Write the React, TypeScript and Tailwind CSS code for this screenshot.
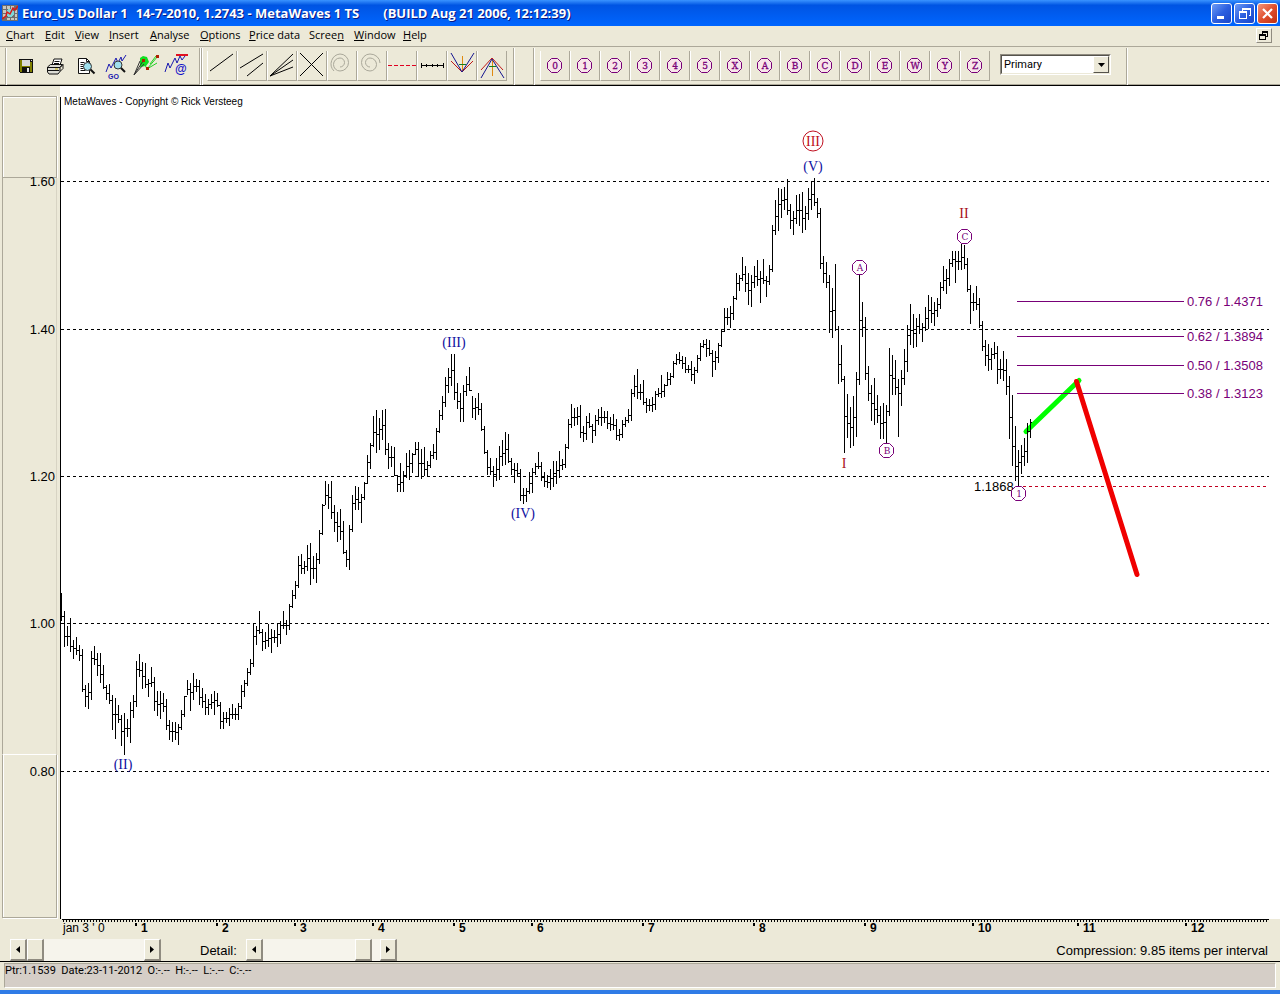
import React from 'react';

// Each run lists "high-low" pairs in thirds of a chart unit below `base`.
const runs = [
  {
    base: 560,
    bars: '98-183 153-260 197-257 174-275 240-296 231-284 255-302 267-395 375-440 370-446 273-420 258-315 280-347 278-368 316-386 374-421 373-433 405-509 414-536 436-488 465-557 459-584 477-530 427-548 405-473 303-440 282-352 306-386 309-383 358-410 321-380 350-453 394-468 393-476 400-456 417-509 480-540 486-545 486-540 492-554 450-509 408-470 360-405 370-452 339-421 356-395 360-434 384-444 402-464 418-466 402-448 394-464 399-440 425-506 456-506 456-488 444-497 432-478 444-480 429-480 375-446 360-411 324-378 297-346 191-322 198-255 153-222 207-272 216-267 191-260 207-278 210-250 192-260 183-251 153-206 180-224 132-209 90-143 63-117',
  },
  {
    base: 320,
    bars: '708-803 702-762 723-763 675-753 669-795 708-776 699-789 630-732 552-644 484-556 492-567 484-598 555-636 576-665 567-660 604-701 690-742 615-749 525-636 497-570 501-570 522-608 487-541 405-493 369-446 289-382 270-399 294-390 270-361 267-404 369-448 378-441 381-467 465-517 429-515 453-516 399-474 390-479 400-458 366-405 366-472 387-476 381-467 423-468 393-443 372-416 324-421 270-338 228-299 171-261 144-218 102-197 102-239 189-266 219-307 195-305 168-228 141-213 228-293 234-299 219-284 249-333 318-402 390-464 414-466 438-500 414-483 378-479 360-439 336-435 342-430 414-465 429-490 429-470 447-542 504-551 504-547 456-521 444-518 429-464 396-448 426-484 456-502 465-503 447-510 423-500 423-493 393-474',
  },
  {
    base: 320,
    bars: '417-450 372-444 297-387 252-323 264-318 261-315 255-354 318-365 288-360 279-323 312-369 284-347 267-315 261-318 272-308 272-327 290-333 282-330 297-360 327-363 300-354 291-321 267-309 207-303 165-231 147-237 192-240 180-254 234-279 237-272 231-275 213-270 204-230 165-234 192-231 156-198 159-194 123-173 102-135 96-132 108-147 111-159 135-159 123-183 141-192 105-158 69-123 60-84 57-111 60-108 90-171 93-150 69-129 30-80',
  },
  {
    base: 120,
    bars: '565-635 565-616 557-623 528-599 459-540 465-513 411-483 438-515 459-554 465-560 438-503 420-497 453-548 417-492 468-530 435-494 315-456 240-344 204-332 208-293 201-269 177-285 252-326 273-345 225-311 222-317 216-338 258-329 204-299 187-271 174-258 234-293 264-446 408-489 425-503 465-638 504-654 432-632 618-791 675-785 768-999 822-953 861-984 828-977 756-950 465-795 546-651 591-779 738-843 795-903 774-915 825-910 858-956 849-956 855-968 684-888 705-824 720-824 777-950 750-858 687-795 615-756 552-675 582-684 594-680 582-642 609-666 561-633 525-628 531-609 546-617 534-590',
  },
  {
    base: 190,
    bars: '276-357 228-302 237-311 207-288 183-230 183-278 183-239 163-240 165-236 204-305 285-402 308-362 288-360 324-414 393-483 450-527 462-543 474-541 456-507 468-581 507-567 483-573 507-614 558-746 615-827 708-872 780-888 765-851 744-827 699-818 687-743',
  },
];

const bars = runs.flatMap(({ base, bars }) =>
  bars.split(' ').map((pair) => {
    const [hi, lo] = pair.split('-').map((v) => Math.round(base + Number(v) / 3));
    return { hi, lo };
  }),
);

const barPath = bars
  .map(({ hi, lo }, i) => {
    const x = 61 + i * 3;
    const next = bars[i + 1];
    const close = next
      ? Math.round((Math.max(hi, next.hi) + Math.min(lo, next.lo)) / 2)
      : Math.round((hi + lo) / 2) - 7;
    const y = Math.max(hi, Math.min(lo - 1, close));
    return `M${x} ${hi}h1V${lo}h-1zM${x + 1} ${y}h1v1h-1z${next ? `M${x + 2} ${y}h1v1h-1z` : ''}`;
  })
  .join('');

const menus = [
  ['', 'C', 'hart', 'w-[39px]'],
  ['', 'E', 'dit', 'w-[30px]'],
  ['', 'V', 'iew', 'w-[34px]'],
  ['', 'I', 'nsert', 'w-[41px]'],
  ['', 'A', 'nalyse', 'w-[50px]'],
  ['', 'O', 'ptions', 'w-[49px]'],
  ['', 'P', 'rice data', 'w-[60px]'],
  ['Scree', 'n', '', 'w-[45px]'],
  ['', 'W', 'indow', 'w-[49px]'],
  ['', 'H', 'elp', 'w-[30px]'],
];

const years: [string, number][] = [
  ['1', 135], ['2', 216], ['3', 294], ['4', 372], ['5', 453], ['6', 531],
  ['7', 642], ['8', 753], ['9', 864], ['10', 972], ['11', 1077], ['12', 1185],
];

const prices: [string, number][] = [
  ['1.60', 181], ['1.40', 329], ['1.20', 476], ['1.00', 623], ['0.80', 771],
];

const levels: [string, number][] = [
  ['0.76 / 1.4371', 301], ['0.62 / 1.3894', 336], ['0.50 / 1.3508', 365], ['0.38 / 1.3123', 393],
];

const fileTools: [string, React.ReactNode][] = [
  ['Save', (
    <g key="s" shapeRendering="crispEdges">
      <path d="M6 5h14v14H7l-1-1z" fill="#111" />
      <path d="M7 6h2v12H7zM17 8h2v10h-2zM9 12h8v1H9z" fill="#808000" />
      <path d="M9 6h8v6H9z" fill="#d8d8d8" />
      <path d="M14 14h2v4h-2z" fill="#e8e8e8" />
      <path d="M18 6h1v1h-1z" fill="#ddd" />
    </g>
  )],
  ['Print', (
    <g key="p" stroke="#111" strokeWidth="1">
      <path d="M9 11l2-6h8l-2 6z" fill="#fff" />
      <path d="M11.500 7.500h5M11 9.500h5" />
      <path d="M4.500 13l3-2.500h12l-2.500 3v4l-2 2.500h-9l-1.500-2z" fill="#dcdcd4" />
      <path d="M4.500 13.500h12.500M5 16.500h11M17 13.500l3-3v4l-3 3" fill="none" />
      <path d="M12 15h3" stroke="#c8b400" />
    </g>
  )],
  ['Preview', (
    <g key="v">
      <path d="M5.500 4.500h8l3 3v12h-11z" fill="#fff" stroke="#111" />
      <path d="M13.500 4.500v3h3M7.500 8.500h4M7.500 10.500h3M7.500 12.500h3M7.500 14.500h3M7.500 16.500h5" stroke="#111" fill="none" />
      <circle cx="14.500" cy="12.500" r="4" fill="#9fe0ee" stroke="#333" />
      <path d="M17.500 15.500l4 4" stroke="#111" strokeWidth="2" />
    </g>
  )],
  ['Go to wave', (
    <g key="g">
      <path d="M3 18l3-8 2 4 5-10 2 5 3-6 1 4 4-6" fill="none" stroke="#1818b0" />
      <circle cx="15" cy="11" r="4" fill="#9fe0ee" stroke="#333" />
      <path d="M18 14l4 4" stroke="#111" strokeWidth="2" />
      <text x="5" y="25" fontSize="7" fontWeight="bold" fill="#1818b0" className="font-['Liberation_Sans',sans-serif]">GO</text>
    </g>
  )],
  ['Fan', (
    <g key="f" fill="none">
      <path d="M7 4l3-2 4 1 2 5-3 4-6 1z" fill="#10e020" />
      <path d="M1 21l6-14M1 21l10-11M1 21l9-14" stroke="#333" />
      <path d="M10 7l4 8M14 15L25 2M14 15l10-6M17 10l6-8" stroke="#20d020" />
      <path d="M9 5h3v3H9zM13 13h3v3h-3zM23 1h3v3h-3z" fill="#b02000" />
    </g>
  )],
  ['Wave at', (
    <g key="a" fill="none">
      <path d="M2 18l3-9 2 5 5-10 2 5 3-7 2 4 3-4" stroke="#1818b0" />
      <path d="M13 1h12" stroke="#e01020" strokeWidth="2" />
      <text x="12" y="19" fontSize="12" fontWeight="bold" fill="#1414c8" className="font-['Liberation_Sans',sans-serif]">@</text>
    </g>
  )],
];

const drawTools: [string, React.ReactNode][] = [
  ['Line', <path key="a" d="M3 21L26 4" stroke="#000" />],
  ['Channel', <path key="b" d="M3 18L26 4M10 26L26 13" stroke="#000" />],
  ['Fan lines', <path key="c" d="M3 26L26 4M3 26L26 10M3 26L26 17" stroke="#000" />],
  ['Cross', <path key="d" d="M3 3l23 23M26 3L3 26" stroke="#000" />],
  ['Spiral', <path key="e" d="M7 21A10 10 0 0 1 13 4A8.500 8.500 0 0 1 13 21A6.500 6.500 0 0 1 13 8A4.500 4.500 0 0 1 13 17" stroke="#aaa89a" />],
  ['Spiral reversed', <path key="f" d="M23 13A10 9 0 0 0 13 4A8.500 8.500 0 0 0 13 21A6.500 6.500 0 0 0 13 8A4.500 4.500 0 0 0 13 17" stroke="#aaa89a" />],
  ['Dashed line', <path key="g" d="M1 15h28v1H1z" fill="url(#dash-red)" />],
  ['Time ruler', <path key="h" d="M4 15.500h22M4.500 13v5M9.500 14v3M15.500 14v3M20.500 14v3M26.500 13v5" stroke="#000" shapeRendering="crispEdges" />],
  ['Pitchfork down', (
    <g key="i">
      <path d="M15.500 6v15" stroke="#e08a10" />
      <path d="M4 11l11 11L26 11" stroke="#c01818" />
      <path d="M4 3l11 19L27 3" stroke="#141490" />
      <path d="M12 14.500h7" stroke="#108020" />
    </g>
  )],
  ['Pitchfork up', (
    <g key="j">
      <path d="M15.500 10v16" stroke="#e08a10" />
      <path d="M4 20L15 8l11 12" stroke="#c01818" />
      <path d="M4 28L15 9l12 19" stroke="#141490" />
      <path d="M12 16.500h7" stroke="#108020" />
    </g>
  )],
];

const waveTools = ['0', '1', '2', '3', '4', '5', 'X', 'A', 'B', 'C', 'D', 'E', 'W', 'Y', 'Z'];

const toolButton =
  'h-[30px] w-[30px] shrink-0 border-b border-l border-r border-b-[#aca899] border-l-white border-r-[#aca899]';

const OCTAGON = 'M-3 -7H3L7 -3V3L3 7H-3L-7 3V-3Z';

function Separator() {
  return <div className="h-[37px] w-[2px] shrink-0 border-l border-r border-l-[#aca899] border-r-white" />;
}

function WaveMark({ x, y, label }: { x: number; y: number; label: string }) {
  return (
    <g transform={`translate(${x} ${y})`}>
      <path d={OCTAGON} fill="#fff" stroke="#780078" transform="translate(.5 .5)" />
      <text x="1" y="4" textAnchor="middle" fontSize="9" fill="#780078" className="font-['DejaVu_Serif',serif]">
        {label}
      </text>
    </g>
  );
}

function Arrow({ dir }: { dir: 'left' | 'right' }) {
  return (
    <svg width="4" height="7" viewBox="0 0 4 7" className="block">
      <path d={dir === 'left' ? 'M4 0v7L0 3.500z' : 'M0 0v7l4-3.500z'} fill="#000" />
    </svg>
  );
}

function ScrollControl({ label, value }: { label: string; value: number }) {
  const btn =
    'flex h-[22px] w-[17px] items-center justify-center border-b-2 border-l border-r-2 border-t border-b-[#8f8b80] border-l-white border-r-[#8f8b80] border-t-white bg-[#ece9d8]';
  return (
    <div className="flex">
      <button aria-label={`${label} back`} className={btn}><Arrow dir="left" /></button>
      <input
        type="range"
        aria-label={label}
        min={0}
        max={100}
        defaultValue={value}
        className="m-0 block h-[22px] w-[117px] appearance-none bg-[#f6f4ec] [&::-webkit-slider-thumb]:h-[22px] [&::-webkit-slider-thumb]:w-[17px] [&::-webkit-slider-thumb]:appearance-none [&::-webkit-slider-thumb]:border-b-2 [&::-webkit-slider-thumb]:border-l [&::-webkit-slider-thumb]:border-r-2 [&::-webkit-slider-thumb]:border-t [&::-webkit-slider-thumb]:border-b-[#8f8b80] [&::-webkit-slider-thumb]:border-l-white [&::-webkit-slider-thumb]:border-r-[#8f8b80] [&::-webkit-slider-thumb]:border-t-white [&::-webkit-slider-thumb]:bg-[#ece9d8]"
      />
      <button aria-label={`${label} forward`} className={btn}><Arrow dir="right" /></button>
    </div>
  );
}

function TitleBar() {
  const box = 'flex h-[21px] w-[21px] items-center justify-center rounded-[3px] border border-white';
  return (
    <header className="flex h-[26px] items-center bg-linear-to-b from-[#3a93ff] via-[#0054e3] via-20% to-[#0066ff] pl-[2px] pr-[2px]">
      <svg width="16" height="16" viewBox="0 0 16 16" shapeRendering="crispEdges">
        <path d="M0 0h16v16H0z" fill="#6e6e6e" />
        <path d="M1 1h3v3H1zM5 1h3v3H5zM9 1h3v3H9zM1 5h3v3H1zM1 9h3v3H1zM13 5h2v3h-2zM13 9h2v3h-2zM5 13h3v2H5zM9 13h3v2H9zM13 13h2v2h-2z" fill="#c8c8c0" />
        <circle cx="8" cy="8" r="4" fill="#7ed8d8" />
        <path d="M0 14l4-3 1-4 3 2 3-6 2 2 3-4" fill="none" stroke="#d81818" strokeWidth="1.500" shapeRendering="auto" />
      </svg>
      <h1 className="ml-1 flex flex-1 gap-2 whitespace-nowrap font-['Open_Sans',sans-serif] text-[13px] font-bold leading-4 text-white [text-shadow:1px_1px_0_#0a1883]">
        <span>Euro_US Dollar 1</span>
        <span>14-7-2010, 1.2743 - MetaWaves 1 TS</span>
        <span className="ml-4">(BUILD Aug 21 2006, 12:12:39)</span>
      </h1>
      <div className="flex gap-[2px]">
        <button aria-label="Minimize" className={`${box} bg-linear-to-br from-[#6f9bf5] via-[#2c5fe0] to-[#1a45c8]`}>
          <svg width="15" height="15"><path d="M3 10h7v3H3z" fill="#fff" /></svg>
        </button>
        <button aria-label="Restore" className={`${box} bg-linear-to-br from-[#6f9bf5] via-[#2c5fe0] to-[#1a45c8]`}>
          <svg width="15" height="15" shapeRendering="crispEdges">
            <path d="M5 2h9v2H5zM13 4h1v6h-2V9h1zM5 4h1v1H5zM2 5h8v2H2zM2 7h1v6H2zM9 7h1v6H9zM2 12h8v1H2z" fill="#fff" />
          </svg>
        </button>
        <button aria-label="Close" className={`${box} bg-linear-to-br from-[#f0937a] via-[#e04f2c] to-[#c03010]`}>
          <svg width="15" height="15"><path d="M3 3l9 9M12 3l-9 9" stroke="#fff" strokeWidth="2.200" /></svg>
        </button>
      </div>
    </header>
  );
}

function Toolbar() {
  return (
    <div className="flex h-[38px] items-start border-b border-[#aca899] pl-[5px] pt-px">
      <Separator />
      <div className="ml-1 flex h-[37px] w-[188px] items-center">
        {fileTools.map(([name, art]) => (
          <button key={name} aria-label={name} className="flex h-[30px] w-[30px] shrink-0 items-center justify-center">
            <svg width="26" height="25" viewBox="0 0 26 25" className="block">{art}</svg>
          </button>
        ))}
      </div>
      <Separator />
      <Separator />
      <svg width="0" height="0">
        <defs>
          <pattern id="dash-red" width="6" height="1" patternUnits="userSpaceOnUse">
            <path d="M1 0h4v1H1z" fill="#e00020" />
          </pattern>
        </defs>
      </svg>
      <div className="mt-[3px] ml-1 flex w-[306px]">
        {drawTools.map(([name, art]) => (
          <button key={name} aria-label={name} className={toolButton}>
            <svg width="28" height="29" viewBox="1 1 28 29" fill="none" className="block">{art}</svg>
          </button>
        ))}
      </div>
      <Separator />
      <div className="w-[18px]" />
      <Separator />
      <div className="mt-[3px] ml-[5px] flex">
        {waveTools.map((w) => (
          <button key={w} aria-label={`Wave ${w}`} className={toolButton}>
            <svg width="28" height="29" viewBox="-14 -15 28 29" className="block">
              <path d={OCTAGON} fill="#f8e6ea" stroke="#780078" transform="translate(-.5 -.5)" />
              <text y="3" textAnchor="middle" fontSize="9" fill="#780078" stroke="#780078" strokeWidth=".3" className="font-['DejaVu_Serif',serif]">
                {w}
              </text>
            </svg>
          </button>
        ))}
      </div>
      <div className="relative mt-[6px] ml-[10px] mr-[15px] h-[21px] w-[111px] shrink-0 border border-b-white border-l-[#8f8b80] border-r-white border-t-[#8f8b80] bg-white">
        <select aria-label="Wave degree" className="block h-[19px] w-full appearance-none border border-[#55534c] border-b-[#ece9d8] border-r-[#ece9d8] bg-white px-[2px] py-0 font-['Roboto',sans-serif] text-[11px] leading-4 text-black">
          <option>Primary</option>
        </select>
        <div className="pointer-events-none absolute right-px top-px flex h-[17px] w-[16px] items-center justify-center border border-b-[#55534c] border-l-white border-r-[#55534c] border-t-white bg-[#ece9d8]">
          <svg width="7" height="4" viewBox="0 0 7 4"><path d="M0 0h7L3.500 4z" /></svg>
        </div>
      </div>
      <Separator />
    </div>
  );
}

function Chart() {
  return (
    <main className="flex border-t border-black">
      <div className="relative w-[60px] shrink-0 pl-[2px] pt-[10px]">
        <div className="flex w-[55px] flex-col">
          <div className="h-[82px] border border-[#aca899] shadow-[inset_1px_1px_0_#fff,1px_0_0_#fff]" />
          <div className="h-[576px] border-l border-r border-l-[#aca899] border-r-[#d8d4c4]" />
          <div className="h-[164px] border border-t-white border-[#aca899] shadow-[inset_1px_0_0_#fff,1px_1px_0_#fff]" />
        </div>
        {prices.map(([label, y]) => (
          <span
            key={label}
            className="absolute right-[5px] font-['Liberation_Sans',sans-serif] text-[13px] leading-4"
            style={{ top: y - 93 }}
          >
            {label}
          </span>
        ))}
      </div>
      <svg height="850" className="block min-w-0 flex-1 font-['Liberation_Sans',sans-serif] text-[13px]">
        <g transform="translate(-60 -86)">
          <rect x="60" y="86" width="100%" height="833" fill="#fff" />
          <g shapeRendering="crispEdges" fill="none">
            <path d="M60.500 97V919" stroke="#000" />
            {prices.map(([label, y]) => (
              <path key={label} d={`M61 ${y}.500H1269`} stroke="#000" strokeDasharray="3 3" />
            ))}
            <path d="M1023 486.500H1267" stroke="#c00020" strokeDasharray="3 3" />
            <path d="M62 919.500H1269" stroke="#000" />
            <path d="M63 921H1269" stroke="#000" strokeWidth="2" strokeDasharray="1 2" />
          </g>
          <path d="M1026 431.500L1079 380.500" stroke="#00ff00" strokeWidth="5" strokeLinecap="round" />
          <path d={levels.map(([, y]) => `M1017 ${y}h167v1h-167z`).join('')} fill="#780078" />
          <path d={barPath} shapeRendering="crispEdges" />
          <path d="M1076.500 381.500L1137 574.500" stroke="#f00000" strokeWidth="5" strokeLinecap="round" />
          {levels.map(([label, y]) => (
            <text key={label} x="1187" y={y + 5} fill="#780078">{label}</text>
          ))}
          <text x="974" y="491">1.1868</text>
          <text x="64" y="105" fontSize="10" className="font-['Liberation_Sans',sans-serif]">MetaWaves - Copyright © Rick Versteeg</text>
          <g textAnchor="middle" fontSize="14" className="font-['Liberation_Serif',serif]">
            <circle cx="813" cy="141" r="10" fill="none" stroke="#c01020" />
            <text x="813" y="146" fill="#c01020">III</text>
            <text x="964" y="218" fill="#a81020">II</text>
            <text x="844" y="468" fill="#a81020">I</text>
            <g fill="#1010a0">
              <text x="813" y="171">(V)</text>
              <text x="454" y="347">(III)</text>
              <text x="523" y="518">(IV)</text>
              <text x="123" y="769">(II)</text>
            </g>
          </g>
          <WaveMark x={859} y={267} label="A" />
          <WaveMark x={886} y={450} label="B" />
          <WaveMark x={964} y={236} label="C" />
          <WaveMark x={1018} y={493} label="1" />
          <text x="63" y="932" fontSize="12">jan 3 ' 0</text>
          {years.map(([label, x]) => (
            <g key={label}>
              <path d={`M${x} 923h2v3h-2z`} />
              <text x={x + 6} y="932" fontSize="12" fontWeight="bold">{label}</text>
            </g>
          ))}
        </g>
      </svg>
    </main>
  );
}

export default function App() {
  return (
    <div className="flex min-h-screen flex-col bg-[#ece9d8] text-black">
      <TitleBar />
      <nav className="flex h-[20px] items-center pb-[2px] pl-[6px] font-['Open_Sans',sans-serif] text-[11px] leading-4">
        {menus.map(([pre, key, post, width]) => (
          <button key={pre + key + post} className={`${width} shrink-0 whitespace-nowrap text-left`}>
            {pre}<span className="underline">{key}</span>{post}
          </button>
        ))}
        <button aria-label="Restore chart window" className="ml-auto mr-2 flex h-[15px] w-4 items-center justify-center border border-b-[#8f8b80] border-l-white border-r-[#8f8b80] border-t-white">
          <svg width="10" height="9" shapeRendering="crispEdges">
            <path d="M3 0h6v2H3zM8 2h1v4H7V5h1zM3 2h1v1H3zM0 3h7v2H0zM0 5h1v4H0zM6 5h1v4H6zM0 8h7v1H0z" />
          </svg>
        </button>
      </nav>
      <div className="h-px bg-[#aca899]" />
      <Toolbar />
      <Chart />
      <div className="flex h-[26px] items-end border-b border-black pl-[10px] font-['Liberation_Sans',sans-serif] text-[13px] leading-5">
        <ScrollControl label="Position" value={0} />
        <span className="ml-[39px] mr-2 w-[38px] whitespace-nowrap">Detail:</span>
        <ScrollControl label="Detail" value={92} />
        <span className="ml-auto mr-3">Compression: 9.85 items per interval</span>
      </div>
      <footer className="flex flex-1 flex-col border-b-4 border-[#2f7be6] pb-[2px] pl-1 pr-1 pt-px">
        <div className="min-h-[24px] flex-1 whitespace-pre border border-b-white border-l-[#aca899] border-r-white border-t-[#aca899] bg-[#d5cec7] font-['Roboto',sans-serif] text-[11px] leading-[14px]">
          {'Ptr:1.1539  Date:23-11-2012  O:-.--  H:-.--  L:-.--  C:-.--'}
        </div>
      </footer>
    </div>
  );
}
